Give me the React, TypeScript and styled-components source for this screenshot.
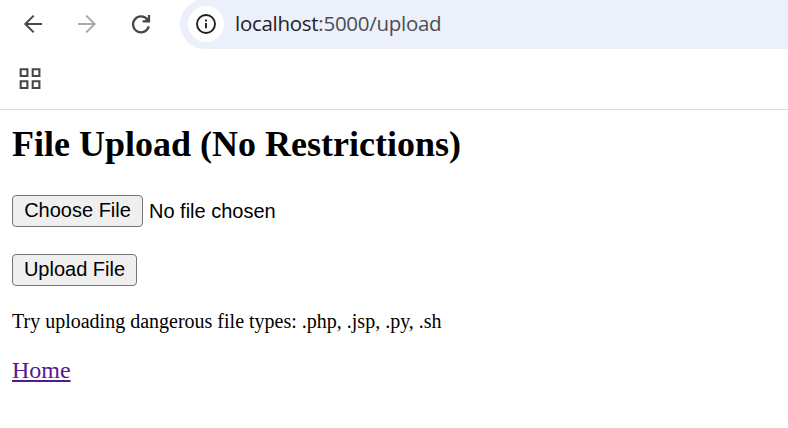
import React from "react";
import styled, { createGlobalStyle } from "styled-components";

const GlobalStyle = createGlobalStyle`
  * { box-sizing: border-box; }
  body { margin: 0; background: #fff; overflow: hidden; }
`;

const Window = styled.div`
  height: 428px;
  overflow: hidden;
  background: #fff;
`;

const Toolbar = styled.div`
  display: flex;
  height: 49px;
  padding-left: 19px;
`;

const NavButton = styled.button<{ $muted?: boolean }>`
  width: 28px;
  height: 48px;
  margin-right: 26px;
  padding: 0;
  border: 0;
  background: none;
  color: ${(p) => (p.$muted ? "#a9a9a9" : "#474747")};
  display: flex;
  align-items: center;
  flex: none;
`;

const AddressBar = styled.div`
  flex: 1;
  height: 50px;
  margin: -1px 0 0 -1px;
  padding-left: 8px;
  border-radius: 25px 0 0 25px;
  background: #ecf0fa;
  display: flex;
  align-items: center;
`;

const SiteInfo = styled.span`
  width: 36px;
  height: 36px;
  border-radius: 50%;
  background: #fff;
  display: flex;
  align-items: center;
  justify-content: center;
  color: #1f1f1f;
`;

const Url = styled.span`
  margin-left: 11px;
  padding-bottom: 2px;
  font: 20.5px/28px "Open Sans", sans-serif;
  letter-spacing: -0.28px;
  color: #4b4e52;
  white-space: nowrap;
`;

const Host = styled.span`
  color: #1f2023;
`;

const BookmarksBar = styled.div`
  height: 61px;
  padding: 18px 0 0 19px;
  border-bottom: 1px solid #dcdcdc;
  color: #474747;
`;

const Page = styled.main`
  padding: 13px 12px 0;
  color: #000;
  font-family: "Liberation Serif", serif;
`;

const Title = styled.h2`
  margin: 0;
  font-size: 36px;
  line-height: 42px;
`;

const FileField = styled.div`
  display: flex;
  align-items: center;
  margin-top: 30px;
  font: 20px/23px "Liberation Sans", sans-serif;
`;

const Button = styled.button<{ $width: number }>`
  width: ${(p) => p.$width}px;
  height: 32px;
  padding: 0 0 2px;
  border: 1px solid #767676;
  border-radius: 4px;
  background: #efefef;
  color: #000;
  font: 20px/23px "Liberation Sans", sans-serif;
  white-space: nowrap;
`;

const FileStatus = styled.span`
  margin-left: 6px;
`;

const SubmitRow = styled.div`
  display: flex;
  margin-top: 27px;
`;

const Hint = styled.p`
  margin: 23px 0 0;
  font-size: 20px;
  line-height: 24px;
`;

const HomeLink = styled.a`
  display: inline-block;
  margin-top: 23px;
  font-size: 24px;
  line-height: 28px;
  color: #551a8b;
  text-decoration: underline;
  text-decoration-thickness: 2px;
  text-underline-offset: 2px;
`;

const Icon = ({ children }: { children: React.ReactNode }) => (
  <svg width="28" height="28" viewBox="0 0 28 28" fill="none" stroke="currentColor" strokeWidth="2">
    {children}
  </svg>
);

export default function App() {
  return (
    <Window>
      <GlobalStyle />
      <Toolbar>
        <NavButton aria-label="Back">
          <Icon>
            <path d="M23 14H6.5M14.7 5.6L6.3 14l8.4 8.4" />
          </Icon>
        </NavButton>
        <NavButton aria-label="Forward" $muted>
          <Icon>
            <path d="M5 14h16.5M13.3 5.6l8.4 8.4-8.4 8.4" />
          </Icon>
        </NavButton>
        <NavButton aria-label="Reload">
          <Icon>
            <path d="M21.8 16.4A8 8 0 1 1 20.4 9.4L18.6 11.2M22 5v6.4H15.6" strokeWidth="2.3" />
          </Icon>
        </NavButton>
        <AddressBar>
          <SiteInfo>
            <svg width="22" height="22" viewBox="0 0 22 22" fill="none" stroke="currentColor" strokeWidth="1.9">
              <circle cx="11" cy="11" r="9" />
              <path d="M11 10v5.2M11 6.6v2" />
            </svg>
          </SiteInfo>
          <Url>
            <Host>localhost</Host>:5000/upload
          </Url>
        </AddressBar>
      </Toolbar>
      <BookmarksBar>
        <svg width="24" height="24" viewBox="0 0 24 24" fill="none" stroke="currentColor" strokeWidth="2.1">
          <path d="M1.7 2.3h6.7v6.7H1.7zM13.7 2.3h6.7v6.7h-6.7zM1.7 14.3h6.7V21H1.7zM13.7 14.3h6.7V21h-6.7z" />
        </svg>
      </BookmarksBar>
      <Page>
        <Title>File Upload (No Restrictions)</Title>
        <FileField>
          <Button $width={131}>Choose File</Button>
          <FileStatus>No file chosen</FileStatus>
        </FileField>
        <SubmitRow>
          <Button $width={125}>Upload File</Button>
        </SubmitRow>
        <Hint>Try uploading dangerous file types: .php, .jsp, .py, .sh</Hint>
        <HomeLink>Home</HomeLink>
      </Page>
    </Window>
  );
}
